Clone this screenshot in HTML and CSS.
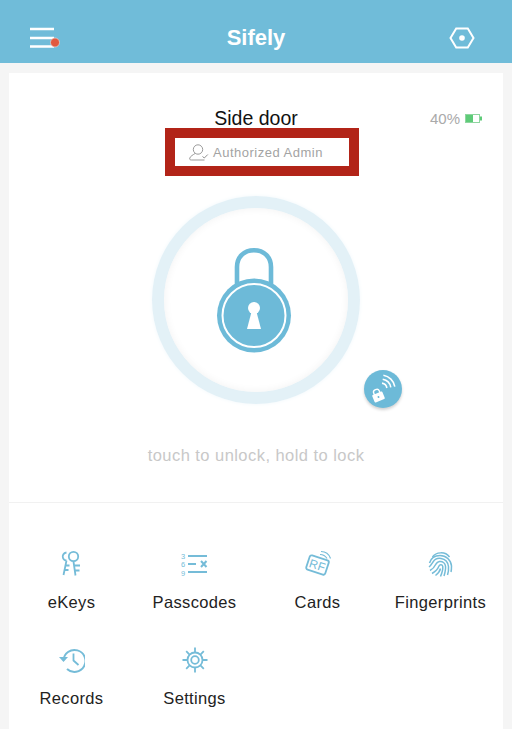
FILE: index.html
```html
<!DOCTYPE html>
<html lang="en">
<head>
  <meta charset="UTF-8" />
  <meta name="viewport" content="width=device-width, initial-scale=1.0" />
  <title>Sifely</title>
  <link rel="stylesheet" href="styles.css">
</head>
<body>
  <header class="topbar">
    <div class="menu-btn">
      <svg width="30" height="22" viewBox="0 0 30 22">
        <path d="M0 2H24M0 11H24M0 19.5H24" stroke="#fff" stroke-width="2.6" fill="none"/>
        <circle cx="25" cy="15.5" r="4.5" fill="#e2593f" stroke="#f3e3df" stroke-width="0.6"/>
      </svg>
    </div>
    <h1>Sifely</h1>
    <div class="gear-btn">
      <svg width="26" height="22" viewBox="0 0 26 22">
        <path d="M1.5 11L7.2 1.5H18.8L24.5 11L18.8 20.5H7.2Z" fill="none" stroke="#fff" stroke-width="2"/>
        <circle cx="13" cy="11" r="2.8" fill="#fff"/>
      </svg>
    </div>
  </header>

  <main class="card">
    <div class="title-row">
      <span></span>
      <h2>Side door</h2>
      <div class="battery">
        <span>40%</span>
        <svg width="17" height="9" viewBox="0 0 17 9">
          <rect x="0.5" y="0.5" width="14" height="8" fill="#fff" stroke="#8fd6a0"/>
          <rect x="1" y="1" width="7" height="7" fill="#5ecb78"/>
          <rect x="15" y="2.5" width="2" height="4" fill="#5ecb78"/>
        </svg>
      </div>
    </div>

    <div class="admin-box">
      <svg width="20" height="17" viewBox="0 0 20 17">
        <circle cx="9" cy="5.5" r="4.7" fill="none" stroke="#8f8f8f" stroke-width="0.9"/>
        <path d="M6 9.5C4 11 1.5 12 0.8 14C0.4 15.5 1 16 2.5 16H15.5" fill="none" stroke="#8f8f8f" stroke-width="0.9"/>
        <path d="M13.5 12.5L15.3 14L18.8 10.5" fill="none" stroke="#8f8f8f" stroke-width="1"/>
      </svg>
      <span>Authorized Admin</span>
    </div>

    <div class="lock-area">
      <div class="lock-ring">
        <div class="lock-face">
          <svg width="76" height="106" viewBox="0 0 76 106">
            <path d="M21 38V19C21 9 28 2.3 38 2.3C48 2.3 55 9 55 19V38" fill="none" stroke="#6dbad8" stroke-width="4.6"/>
            <circle cx="38" cy="67.5" r="37" fill="#6dbad8"/>
            <circle cx="38" cy="67.5" r="31.5" fill="none" stroke="#fff" stroke-width="2"/>
            <circle cx="38" cy="60" r="6" fill="#fff"/>
            <path d="M36 62H40L45 81H31Z" fill="#fff"/>
          </svg>
        </div>
      </div>
      <div class="remote-btn">
        <svg width="38" height="38" viewBox="0 0 38 38">
          <path d="M18 13.1A6 6 0 0 1 22.9 18M18.7 9.2A10 10 0 0 1 26.8 17.3M19.4 5.2A14 14 0 0 1 30.8 16.6" fill="none" stroke="#fff" stroke-width="1.6"/>
          <g transform="rotate(-22 14.5 27)">
            <path d="M11.5 24V21.5C11.5 19.8 12.8 19 14.5 19C16.2 19 17.5 19.8 17.5 21.5V24" fill="none" stroke="#fff" stroke-width="1.4"/>
            <rect x="9" y="23" width="11" height="8" rx="1" fill="#fff"/>
            <circle cx="14.5" cy="27" r="1" fill="#6dbad8"/>
          </g>
        </svg>
      </div>
    </div>

    <p class="hint">touch to unlock, hold to lock</p>

    <div class="actions">
      <div class="action">
        <svg width="24" height="28" viewBox="0 0 24 28">
          <circle cx="13.5" cy="6.5" r="4.7" fill="none" stroke="#75bcd8" stroke-width="1.8"/>
          <path d="M6.5 2.5C3.5 3 2 5.5 3 8C3.5 9.5 5 10.5 6.5 10.5M6.5 10.5L3.5 25M5 15.5H9.5M4.2 20H8.5" fill="none" stroke="#75bcd8" stroke-width="1.8"/>
          <path d="M13.5 11.5L15.5 25.5M14.2 15.5H20M15 20.5H19.5" fill="none" stroke="#75bcd8" stroke-width="1.8"/>
        </svg>
        <span>eKeys</span>
      </div>
      <div class="action">
        <svg width="27" height="26" viewBox="0 0 27 26">
          <text class="num"><tspan x="0" y="7.5">3</tspan><tspan x="0" y="16.1">6</tspan><tspan x="0" y="24.7">9</tspan></text>
          <path d="M7 5H26M7 13H15M7 21H26" stroke="#75bcd8" stroke-width="1.8" fill="none"/>
          <path d="M20 10L25.5 16M25.5 10L20 16" stroke="#75bcd8" stroke-width="2" fill="none"/>
        </svg>
        <span>Passcodes</span>
      </div>
      <div class="action">
        <svg width="26" height="27" viewBox="0 0 26 27">
          <rect x="2.5" y="7" width="20" height="15" rx="2" fill="none" stroke="#75bcd8" stroke-width="1.8" transform="rotate(18 12.5 14.5)"/>
          <text x="12.5" y="19" class="rf" text-anchor="middle" transform="rotate(18 12.5 14.5)">RF</text>
          <path d="M15 4C18 4 20.5 5.5 22 8M16 1C20 1 24 3.5 25.5 8" fill="none" stroke="#75bcd8" stroke-width="1.2"/>
        </svg>
        <span>Cards</span>
      </div>
      <div class="action">
        <svg width="25" height="26" viewBox="0 0 25 26">
          <g fill="none" stroke="#75bcd8" stroke-width="1.5">
            <path d="M4.5 6C8 1 17 0 21.5 6"/>
            <path d="M1.5 12C3 7 7 4.5 12 4.5C18 4.5 23 9 23.5 15C23.5 17 23.5 19 23 21"/>
            <path d="M1 16C3 14.5 4 12.5 5 11C7 8 10 7 13 7.5C17 8.2 20 11.5 20.5 15.5C20.7 18 20.5 21 19.5 24"/>
            <path d="M2 19.5C5 18 7 15 8 13C9.5 10.5 13 9.5 15.5 11.5C17.5 13 17.8 15.5 17.5 18C17.3 20 17 22 16 25"/>
            <path d="M4 22.5C7.5 20.5 10 17.5 11 15C11.8 13 14.5 13.3 14.8 15.5C15 18.5 14 22 12.5 25.5"/>
            <path d="M7.5 24.5C10 22.5 12 20 12.5 17.5"/>
          </g>
        </svg>
        <span>Fingerprints</span>
      </div>
      <div class="action">
        <svg width="26" height="25" viewBox="0 0 26 25">
          <path d="M4.5 13A11 11 0 1 1 8 21.5" fill="none" stroke="#75bcd8" stroke-width="2"/>
          <path d="M0 9.5L4.5 14.5L9 9.5Z" fill="#75bcd8"/>
          <path d="M14.5 6V13L19.5 17.5" fill="none" stroke="#75bcd8" stroke-width="1.8"/>
        </svg>
        <span>Records</span>
      </div>
      <div class="action">
        <svg width="26" height="26" viewBox="0 0 26 26">
          <circle cx="13" cy="13" r="7.5" fill="none" stroke="#75bcd8" stroke-width="1.8"/>
          <circle cx="13" cy="13" r="3.8" fill="none" stroke="#75bcd8" stroke-width="1.8"/>
          <path d="M13 0.5V5M13 21V25.5M0.5 13H5M21 13H25.5M4.2 4.2L7.3 7.3M18.7 18.7L21.8 21.8M21.8 4.2L18.7 7.3M7.3 18.7L4.2 21.8" stroke="#75bcd8" stroke-width="1.8" fill="none"/>
        </svg>
        <span>Settings</span>
      </div>
    </div>
  </main>
</body>
</html>
```

FILE: styles.css
```css
* {
  box-sizing: border-box;
  margin: 0;
  padding: 0;
}

html, body {
  height: 729px;
  overflow: hidden;
}

body {
  background: #f5f5f5;
  font-family: "Liberation Sans", Arial, sans-serif;
  color: #222;
}

svg {
  display: block;
}

.topbar {
  height: 63px;
  background: #70bcd9;
  display: grid;
  grid-template-columns: 1fr auto 1fr;
  align-items: center;
  padding: 12px 30px 0;
  color: #fff;
}

.topbar h1 {
  font-size: 22px;
  font-weight: bold;
}

.gear-btn {
  justify-self: end;
  margin-right: 7px;
}

.card {
  margin: 10px 9px 0;
  height: 656px;
  background: #fff;
  padding-top: 33px;
}

.title-row {
  display: grid;
  grid-template-columns: 1fr auto 1fr;
  align-items: center;
  height: 24px;
  padding: 0 21px;
}

.title-row h2 {
  font-size: 19.5px;
  font-weight: normal;
  color: #111;
}

.battery {
  justify-self: end;
  display: flex;
  align-items: center;
  gap: 5px;
  font-size: 15px;
  color: #aaa;
}

.admin-box {
  width: 194px;
  height: 48px;
  margin: -2px 0 0 156px;
  border: 10px solid #b22418;
  background: #fff;
  display: flex;
  align-items: center;
  gap: 4px;
  padding-left: 14px;
  font-size: 13px;
  letter-spacing: 0.5px;
  color: #a3a3a3;
}

.lock-area {
  position: relative;
  display: flex;
  justify-content: center;
  margin-top: 20px;
}

.lock-ring {
  width: 208px;
  height: 208px;
  border-radius: 50%;
  background: radial-gradient(circle, #e3f1f7 88%, #edf6fa 96%, #f6fbfd 100%);
  box-shadow: 0 0 4px #f1f8fb;
  display: flex;
  align-items: center;
  justify-content: center;
}

.lock-face {
  width: 184px;
  height: 184px;
  border-radius: 50%;
  background: #fff;
  box-shadow: inset 0 0 8px #f2f2f2;
  display: flex;
  align-items: center;
  justify-content: center;
  padding: 2px 4px 0 0;
}

.remote-btn {
  position: absolute;
  left: 355px;
  top: 174px;
  width: 38px;
  height: 38px;
  border-radius: 50%;
  background: #6dbad8;
  box-shadow: 0 2px 3px rgba(0, 0, 0, 0.18);
}

.hint {
  margin-top: 42px;
  text-align: center;
  font-size: 16.5px;
  letter-spacing: 0.45px;
  color: #c8c8c8;
  line-height: 18px;
}

.actions {
  margin-top: 38px;
  border-top: 1px solid #f1f1f1;
  display: grid;
  grid-template-columns: repeat(4, 123px);
  grid-auto-rows: 96px;
  padding: 12px 0 0 1px;
}

.action {
  display: flex;
  flex-direction: column;
  align-items: center;
  font-size: 16.5px;
  letter-spacing: 0.35px;
  color: #222;
}

.action svg {
  height: 28px;
  margin-top: 35px;
  margin-bottom: 15px;
}

.action span {
  line-height: 18px;
}

.num {
  font-size: 7.5px;
  fill: #75bcd8;
  font-family: "Liberation Sans", Arial, sans-serif;
}

.rf {
  font-size: 12px;
  fill: #75bcd8;
  font-family: "Liberation Sans", Arial, sans-serif;
}
```
